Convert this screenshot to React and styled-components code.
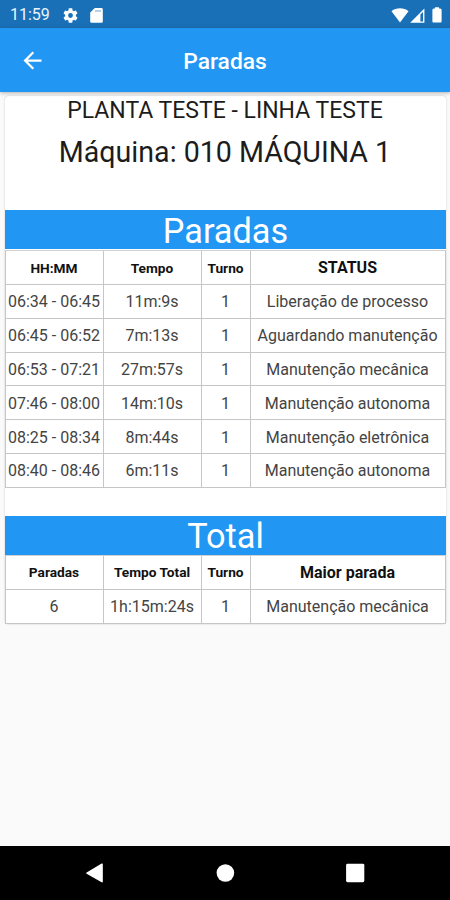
import React from 'react';
import styled, { createGlobalStyle } from 'styled-components';

const GlobalStyle = createGlobalStyle`
  * {
    box-sizing: border-box;
  }

  body {
    margin: 0;
    background-color: #fafafa;
    font-family: Roboto, "Liberation Sans", sans-serif;
    color: #1c1c1c;
  }
`;

const Screen = styled.div`
  display: flex;
  flex-direction: column;
  width: 450px;
  height: 900px;
  overflow: hidden;
  background-color: #fafafa;
`;

const StatusBar = styled.div`
  display: flex;
  align-items: center;
  justify-content: space-between;
  flex: none;
  height: 28px;
  padding: 2px 8px 0 10px;
  background-color: #1a70b7;
  color: #eaf4fc;
`;

const StatusGroup = styled.div`
  display: flex;
  align-items: center;
`;

const Clock = styled.span`
  width: 53px;
  font-size: 16px;
  line-height: 26px;
`;

const StatusIcon = styled.svg`
  display: block;
  margin-left: ${props => props.$gap || 0}px;
  fill: #fff;
`;

const AppBar = styled.header`
  position: relative;
  display: grid;
  grid-template-columns: 64px 1fr 64px;
  align-items: center;
  flex: none;
  height: 64px;
  background-color: #2196f3;
  box-shadow: 0 1px 4px rgba(0, 0, 0, 0.3);
`;

const BackButton = styled.button`
  display: flex;
  justify-content: center;
  padding: 0;
  border: 0;
  background: none;
`;

const Title = styled.h1`
  margin: 0;
  padding-top: 2px;
  color: #fff;
  font-size: 22.8px;
  font-weight: 500;
  text-align: center;
`;

const Content = styled.main`
  flex: 1;
  padding: 4px 4px 0 5px;
`;

const Card = styled.section`
  height: 528px;
  border-radius: 4px;
  background-color: #fff;
  box-shadow: 0 0 2px rgba(0, 0, 0, 0.22);
`;

const Heading = styled.div`
  height: 114px;
  padding-right: 1px;
  text-align: center;
  white-space: nowrap;
`;

const Plant = styled.p`
  margin: 0;
  font-size: 23px;
  line-height: 30px;
`;

const Machine = styled.p`
  margin: 0;
  padding-top: 8px;
  font-size: 28.6px;
  line-height: 36px;
`;

const Banner = styled.h2`
  height: 39px;
  margin: 0;
  background-color: #2196f3;
  color: #fff;
  font-size: 34.3px;
  font-weight: 400;
  line-height: ${props => props.$line || 43}px;
  text-align: center;
`;

const Table = styled.div`
  padding-top: ${props => props.$top || 0}px;
  margin-bottom: ${props => props.$gap || 0}px;
`;

const Row = styled.div`
  display: grid;
  grid-template-columns: 98px 98px 49px 1fr;
  height: 33.8px;
  border-left: 1px solid #c6c6c6;
  border-bottom: 1px solid #c6c6c6;

  &:first-child {
    height: 35px;
    border-top: 1px solid #d0d0d0;
  }
`;

const Cell = styled.div`
  display: flex;
  align-items: center;
  justify-content: center;
  padding: ${props => (props.$head ? 0 : 1)}px 1px 0 0;
  border-right: 1px solid #c6c6c6;
  color: ${props => (props.$head ? '#111' : '#444')};
  font-size: ${props => props.$size || 16}px;
  font-weight: ${props => (props.$head ? 700 : 400)};
  white-space: nowrap;
`;

const NavBar = styled.nav`
  display: flex;
  align-items: center;
  gap: 111px;
  flex: none;
  height: 54px;
  padding-left: 85px;
  background-color: #000;
`;

const paradas = [
  ['06:34 - 06:45', '11m:9s', '1', 'Liberação de processo'],
  ['06:45 - 06:52', '7m:13s', '1', 'Aguardando manutenção'],
  ['06:53 - 07:21', '27m:57s', '1', 'Manutenção mecânica'],
  ['07:46 - 08:00', '14m:10s', '1', 'Manutenção autonoma'],
  ['08:25 - 08:34', '8m:44s', '1', 'Manutenção eletrônica'],
  ['08:40 - 08:46', '6m:11s', '1', 'Manutenção autonoma'],
];

const total = [['6', '1h:15m:24s', '1', 'Manutenção mecânica']];

const Tabela = ({ colunas, linhas, top, gap }) => (
  <Table $top={top} $gap={gap}>
    <Row>
      {colunas.map((coluna, i) => (
        <Cell key={coluna} $head $size={i === 3 ? 16 : 13.7}>
          {coluna}
        </Cell>
      ))}
    </Row>
    {linhas.map(linha => (
      <Row key={linha[0]}>
        {linha.map((valor, i) => (
          <Cell key={i}>{valor}</Cell>
        ))}
      </Row>
    ))}
  </Table>
);

const App = () => (
  <>
    <GlobalStyle />
    <Screen>
      <StatusBar>
        <StatusGroup>
          <Clock>11:59</Clock>
          <StatusIcon width="15" height="15" viewBox="2 2 20 20">
            <path d="M19.14 12.94c.04-.3.06-.61.06-.94 0-.32-.02-.64-.07-.94l2.03-1.58a.49.49 0 0 0 .12-.61l-1.92-3.32a.49.49 0 0 0-.59-.22l-2.39.96c-.5-.38-1.03-.7-1.62-.94l-.36-2.54a.48.48 0 0 0-.48-.41h-3.84a.48.48 0 0 0-.47.41l-.36 2.54c-.59.24-1.13.57-1.62.94l-2.39-.96a.49.49 0 0 0-.59.22L2.74 8.87a.48.48 0 0 0 .12.61l2.03 1.58c-.05.3-.09.63-.09.94s.02.64.07.94l-2.03 1.58a.49.49 0 0 0-.12.61l1.92 3.32c.12.22.37.29.59.22l2.39-.96c.5.38 1.03.7 1.62.94l.36 2.54c.05.24.24.41.48.41h3.84c.24 0 .44-.17.47-.41l.36-2.54c.59-.24 1.13-.56 1.62-.94l2.39.96c.22.08.47 0 .59-.22l1.92-3.32a.48.48 0 0 0-.12-.61l-2.01-1.58zM12 15.2a3.2 3.2 0 1 1 0-6.4 3.2 3.2 0 0 1 0 6.4z" />
          </StatusIcon>
          <StatusIcon $gap={12} width="13" height="15" viewBox="0 0 13 15">
            <path d="M4.8 0H11.4Q12.8 0 12.8 1.4V13.4Q12.8 14.8 11.4 14.8H1.6Q.2 14.8 .2 13.4V4.6Z" />
            <path d="M5 2.2H11V3.8H5Z" fill="#1a70b7" opacity=".4" />
          </StatusIcon>
        </StatusGroup>
        <StatusGroup>
          <StatusIcon width="18" height="15" viewBox="0 0 18 15">
            <path d="M.5 3.2C5.3-.6 12.7-.6 17.5 3.2L9 14.4Z" />
          </StatusIcon>
          <StatusIcon $gap={1} width="15" height="15" viewBox="0 0 15 15">
            <path fillRule="evenodd" d="M.2 14.8L14.4.6V14.8ZM10.4 6.6V13.6H13V4Z" />
          </StatusIcon>
          <StatusIcon $gap={7} width="10" height="16" viewBox="0 0 10 16">
            <path d="M3 .3H7V1.4H8.2Q9.6 1.6 9.6 3V14.4Q9.6 15.4 8.6 15.4H1.4Q.4 15.4 .4 14.4V3Q.4 1.6 1.8 1.4H3Z" />
          </StatusIcon>
        </StatusGroup>
      </StatusBar>
      <AppBar>
        <BackButton aria-label="Voltar">
          <svg width="27" height="27" viewBox="0 0 24 24" fill="#fff">
            <path d="M20 11H7.83l5.59-5.59L12 4l-8 8 8 8 1.41-1.41L7.83 13H20v-2z" />
          </svg>
        </BackButton>
        <Title>Paradas</Title>
      </AppBar>
      <Content>
        <Card>
          <Heading>
            <Plant>PLANTA TESTE - LINHA TESTE</Plant>
            <Machine>Máquina: 010 MÁQUINA 1</Machine>
          </Heading>
          <Banner>Paradas</Banner>
          <Tabela colunas={['HH:MM', 'Tempo', 'Turno', 'STATUS']} linhas={paradas} top={1} gap={28.2} />
          <Banner $line={41}>Total</Banner>
          <Tabela colunas={['Paradas', 'Tempo Total', 'Turno', 'Maior parada']} linhas={total} />
        </Card>
      </Content>
      <NavBar>
        <svg width="18" height="20" viewBox="0 0 18 20" fill="#fff">
          <path d="M1.6 9.4L16.6.6Q17.8.2 17.8 1.4V18.6Q17.8 19.8 16.6 19.3L1.6 10.8Q.6 10.1 1.6 9.4Z" />
        </svg>
        <svg width="21" height="20" viewBox="0 0 21 20" fill="#fff">
          <circle cx="11.4" cy="10" r="8.8" />
        </svg>
        <svg width="20" height="20" viewBox="0 0 20 20" fill="#fff">
          <rect x=".1" y=".8" width="18.2" height="18.4" rx="1.4" />
        </svg>
      </NavBar>
    </Screen>
  </>
);

export default App;
